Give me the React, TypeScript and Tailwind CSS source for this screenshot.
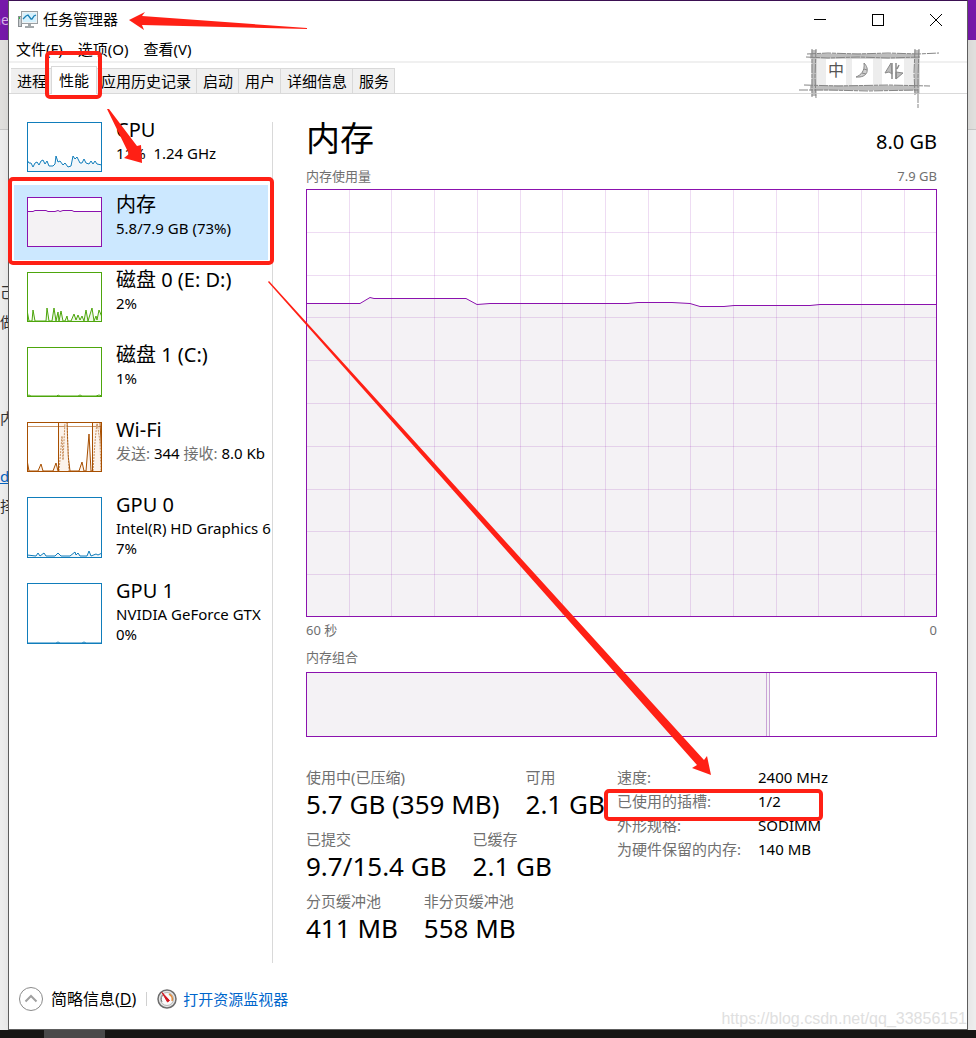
import React from 'react';

type Series = { line: string; open?: boolean; dashed?: boolean };

interface Resource {
  id: string;
  name: string;
  details: React.ReactNode[];
  color: string;
  fill: string;
  height: number;
  series: Series[];
  selected?: boolean;
}

const resources: Resource[] = [
  {
    id: 'cpu',
    name: 'CPU',
    details: ['11%  1.24 GHz'],
    color: '#117dbb',
    fill: '#f1f6fa',
    height: 50,
    series: [
      {
        line: '0,38 2,41 4,41 6,45 8,41 10,40 12,43 14,39 16,38 18,42 20,39 22,44 26,44 28,42 29,34 31,40 33,39 36,43 38,41 41,45 44,44 46,34 48,37 50,35 53,41 55,41 57,37 59,41 62,42 64,39 66,42 68,39 70,42 75,43',
      },
    ],
  },
  {
    id: 'memory',
    name: '内存',
    details: ['5.8/7.9 GB (73%)'],
    color: '#8b12ae',
    fill: '#f4f2f4',
    height: 50,
    selected: true,
    series: [{ line: '0,14.5 6,14.5 8,13.5 19,13.5 21,14.5 28,14.5 31,13.5 33,14.5 36,13.5 45,13.5 47,14.5 75,14.5' }],
  },
  {
    id: 'disk0',
    name: '磁盘 0 (E: D:)',
    details: ['2%'],
    color: '#4da60c',
    fill: '#eff7e9',
    height: 50,
    series: [
      {
        line: '0,38 2,49 5,49 6,38 8,49 19,49 20,36 22,49 25,49 27,36 29,49 31,40 32,49 34,39 36,49 38,49 40,44 41,49 44,49 47,42 49,48 51,43 53,48 55,44 57,49 59,38 61,49 65,36 67,49 69,44 70,48 72,38 75,45',
      },
    ],
  },
  {
    id: 'disk1',
    name: '磁盘 1 (C:)',
    details: ['1%'],
    color: '#4da60c',
    fill: '#eff7e9',
    height: 50,
    series: [{ line: '0,49 2,48 4,49 30,49 31,48 33,49 51,49 53,48 55,49 69,49 72,48 75,49' }],
  },
  {
    id: 'wifi',
    name: 'Wi-Fi',
    details: [
      <>
        <span className="text-[#707070]">发送:</span> 344 <span className="text-[#707070]">接收:</span> 8.0 Kb
      </>,
    ],
    color: '#a74f01',
    fill: '#fcf3eb',
    height: 50,
    series: [
      { line: '0,38 2,49 11,49 14,42 16,49 26,49 29,41 31,49 31.5,49 31.5,0 40,0 41,33 43,49 52,49 55,40 57,49 59,49 62,12 64,49 65.5,49 65.5,0 73,0 75,38' },
      { line: '0,4.5 75,4.5', open: true },
      { line: '32,49 35,14 36,38 38,0 40,0 42,49', dashed: true },
      { line: '66,49 68,20 70,0 73,20 74,49', dashed: true },
    ],
  },
  {
    id: 'gpu0',
    name: 'GPU 0',
    details: ['Intel(R) HD Graphics 6', '7%'],
    color: '#117dbb',
    fill: '#f1f6fa',
    height: 61,
    series: [
      {
        line: '0,58 9,59 11,56 13,59 17,56 19,59 28,59 31,56 34,59 43,59 48,55 49,58 51,56 53,59 60,59 62,54 64,59 69,57 71,58 75,56',
      },
    ],
  },
  {
    id: 'gpu1',
    name: 'GPU 1',
    details: ['NVIDIA GeForce GTX', '0%'],
    color: '#117dbb',
    fill: '#f1f6fa',
    height: 61,
    series: [{ line: '0,60 29,60 31,59 33,60 55,60 57,59 59,60 75,60' }],
  },
];

const menus = ['文件(F)', '选项(O)', '查看(V)'];
const tabs = ['进程', '性能', '应用历史记录', '启动', '用户', '详细信息', '服务'];

const statRows = [
  [
    { label: '使用中(已压缩)', value: '5.7 GB (359 MB)' },
    { label: '可用', value: '2.1 GB' },
  ],
  [
    { label: '已提交', value: '9.7/15.4 GB' },
    { label: '已缓存', value: '2.1 GB' },
  ],
  [
    { label: '分页缓冲池', value: '411 MB' },
    { label: '非分页缓冲池', value: '558 MB' },
  ],
];

const specs = [
  { label: '速度:', value: '2400 MHz' },
  { label: '已使用的插槽:', value: '1/2' },
  { label: '外形规格:', value: 'SODIMM' },
  { label: '为硬件保留的内存:', value: '140 MB' },
];

const Backdrop: React.FC = () => (
  <div className="absolute inset-0 flex flex-col overflow-hidden bg-[#efefef] text-[15px] text-[#333]">
    <div className="h-10 bg-[#7719aa] pt-[10px] text-[#d9b3ea]">
      <span className="flex w-[9px] justify-end overflow-hidden text-sm">ne</span>
    </div>
    <div className="h-[90px] border-b border-[#c8c8c8] bg-[#e2e1df]" />
    <div className="flex w-2 flex-1 flex-col overflow-hidden whitespace-nowrap pt-[147px] leading-[30px]">
      <span>己</span>
      <span>做</span>
      <span className="mt-[66px]">内存</span>
      <a href="#download" className="mt-7 text-[#0563c1] underline">d</a>
      <span>择</span>
    </div>
  </div>
);

const AppIcon: React.FC = () => (
  <svg width="20" height="18" viewBox="0 0 20 18">
    <rect x="0.5" y="5.5" width="3" height="10" fill="#c9cdd0" stroke="#8b9094" />
    <rect x="1" y="6" width="1" height="2" fill="#39b54a" />
    <rect x="3.5" y="0.5" width="16" height="12" fill="#eef2f4" stroke="#9aa0a4" />
    <rect x="5" y="2" width="13" height="9" fill="#d5f1fd" />
    <path d="M5 8 L8 5 L10 4 L13 8 L14 8 L16 5 L18 4" fill="none" stroke="#1b7fb5" strokeWidth="1.3" />
    <path d="M10 13 H13 V15 H16 V17 H7 V15 H10 Z" fill="#a3a8ab" />
  </svg>
);

const Thumb: React.FC<{ item: Resource }> = ({ item }) => (
  <svg
    width="75"
    height={item.height}
    viewBox={`0 0 75 ${item.height}`}
    className="mt-1 shrink-0"
    fill="none"
    stroke={item.color}
  >
    <rect x="0.5" y="0.5" width="74" height={item.height - 1} fill="#fff" />
    {item.series.map((s, i) => (
      <polyline
        key={i}
        points={s.dashed || s.open ? s.line : `0,${item.height} ${s.line} 75,${item.height}`}
        fill={s.open ? 'none' : item.fill}
        strokeDasharray={s.dashed ? '2 1' : undefined}
        opacity={s.dashed || s.open ? 0.6 : 1}
      />
    ))}
    <rect x="0.5" y="0.5" width="74" height={item.height - 1} />
  </svg>
);

const columns = Array.from({ length: 14 }, (_, i) => Math.round((i + 1) * 42.7) + 0.5);
const rows = Array.from({ length: 9 }, (_, i) => Math.round((i + 1) * 42.8) + 0.5);
const usage =
  '0,114.5 54,114.5 64,108.5 68,109.5 160,109.5 171,115.5 184,114.5 322,114.5 332,113.5 366,113.5 384,114.5 394,117.5 418,117.5 428,116.5 504,116.5 514,115.5 631,115.5';

const UsageChart: React.FC = () => (
  <svg className="block h-[428px] w-full" viewBox="0 0 631 428" preserveAspectRatio="none" fill="none">
    <rect width="631" height="428" fill="#fff" />
    <polygon points={`0,428 ${usage} 631,428`} fill="#f4f2f5" />
    <g stroke="#8b12ae" strokeOpacity="0.15">
      {columns.map((x) => (
        <line key={x} x1={x} x2={x} y1="0" y2="428" />
      ))}
      {rows.map((y) => (
        <line key={y} x1="0" x2="631" y1={y} y2={y} />
      ))}
    </g>
    <polyline points={usage} stroke="#8b12ae" />
    <rect x="0.5" y="0.5" width="630" height="427" stroke="#8b12ae" />
  </svg>
);

const Gauge: React.FC = () => (
  <svg width="20" height="20" viewBox="0 0 20 20" fill="none">
    <circle cx="10" cy="10" r="9" fill="#e6e6e6" stroke="#6d6d6d" strokeWidth="1.5" />
    <circle cx="10" cy="10" r="6.5" fill="#fafafa" stroke="#b5b5b5" />
    <path d="M5 13 A6 6 0 0 1 7 5" stroke="#777" />
    <path d="M12 5 A6 6 0 0 1 15 12" stroke="#e08a3c" strokeWidth="1.5" />
    <path d="M5 3.5 L12.5 11.5 L10.5 13 Z" fill="#d2141e" stroke="#d2141e" />
  </svg>
);

const ImeBar: React.FC = () => (
  <svg className="absolute right-[27px] top-[46px]" width="142" height="62" viewBox="0 0 142 62" fill="none">
    <rect x="18" y="10" width="100" height="30" fill="#ededed" />
    <rect x="28" y="12" width="20" height="26" fill="#fff" />
    <rect x="54" y="12" width="21" height="26" fill="#fff" />
    <rect x="84" y="12" width="22" height="26" fill="#fff" />
    <g stroke="#bdbdbd" strokeWidth="5">
      <path d="M12 9 H121 M12 41 H121" />
      <path d="M16 3 V49 M119 3 V47" />
    </g>
    <g stroke="#858585" strokeWidth="1" strokeDasharray="9 1 4 1">
      <path d="M9 7 L30 6 L60 7 L90 6 L120 7 L141 6" />
      <path d="M8 10 L30 11 L60 10 L90 11 L122 10" />
      <path d="M6 38 L40 39 L90 38 L132 39" />
      <path d="M1 43 L30 43 L70 44 L120 43" />
      <path d="M14 2 L14 24 L14 50 M18 2 L17 30 L18 51" />
      <path d="M117 2 L116 26 L117 48 M121 2 L120 30 L120 61" />
    </g>
    <text x="38" y="29" textAnchor="middle" fontSize="16" fill="#555">中</text>
    <path d="M66 16 C72 22 70 31 58 30 C63 28 67 24 66 16 Z" fill="#cfcfcf" stroke="#888" />
    <path d="M66 22 L69 23 M64 26 L68 27" stroke="#888" />
    <path d="M93 16 L87 26 L91 25 L94 27 Z M98 25 L105 26 L98 32 Z" fill="#bdbdbd" stroke="#8a8a8a" />
    <path d="M94 16 V32 M98 16 V32 M101 18 L99 22" stroke="#8a8a8a" strokeWidth="1.5" />
  </svg>
);

const Annotations: React.FC = () => (
  <svg className="pointer-events-none absolute left-0 top-0" width="976" height="1038" viewBox="0 0 976 1038">
    <g fill="none" stroke="#ff2015" strokeWidth="4">
      <rect x="47" y="53" width="53" height="44" rx="3" />
      <rect x="10" y="179" width="262" height="84" rx="3" />
      <rect x="606" y="791" width="215" height="28" rx="3" />
    </g>
    <g fill="#ff2015">
      <path d="M129 20 L145 12 L142 16 L307 28 L307 29 L142 25 L144 30 Z" />
      <path d="M107 109 L109 109 L137 146 L141 145 L142 163 L124 158 L129 154 Z" />
      <path d="M268 282 L269 281 L704 760 L707 756 L711 775 L692 768 L697 765 Z" />
    </g>
  </svg>
);

const App: React.FC = () => {
  return (
    <div className="relative flex min-h-screen flex-col font-['Noto_Sans','Noto_Sans_CJK_SC',sans-serif] text-[15px] text-black">
      <Backdrop />

      <div className="relative mx-2 flex flex-1 flex-col border border-[#5d5d5d] border-t-[#3b1052] bg-white shadow-lg">
        <header className="flex h-[37px] items-center pl-[9px] pr-[2px]">
          <AppIcon />
          <h1 className="ml-[5px] flex-1">任务管理器</h1>
          <button aria-label="最小化" className="flex h-full w-[58px] items-center justify-center">
            <svg width="12" height="12" stroke="#000"><path d="M0 5.5 H12" /></svg>
          </button>
          <button aria-label="最大化" className="flex h-full w-[58px] items-center justify-center">
            <svg width="12" height="12" stroke="#000" fill="none"><rect x="0.5" y="0.5" width="11" height="11" /></svg>
          </button>
          <button aria-label="关闭" className="flex h-full w-[58px] items-center justify-center">
            <svg width="12" height="12" stroke="#000"><path d="M0 0 L12 12 M12 0 L0 12" /></svg>
          </button>
        </header>

        <nav className="flex h-[25px] items-center gap-[15px] border-b-2 border-[#f0f0f0] pl-[7px]">
          {menus.map((m) => (
            <button key={m}>{m}</button>
          ))}
        </nav>

        <div role="tablist" className="flex h-[31px] items-end border-b border-[#d9d9d9] pl-[2px]">
          {tabs.map((t) =>
            t === '性能' ? (
              <button
                key={t}
                role="tab"
                aria-selected="true"
                className="relative -mx-[2px] -mb-px h-7 border border-b-0 border-[#d9d9d9] bg-white px-[7px] pb-px"
              >
                {t}
              </button>
            ) : (
              <button
                key={t}
                role="tab"
                aria-selected="false"
                className="h-[25px] border-r border-t border-[#d9d9d9] bg-[#f0f0f0] pl-[6px] pr-[5px]"
              >
                {t}
              </button>
            ),
          )}
        </div>

        <main className="flex pr-[30px]">
          <aside className="mt-4 w-[263px] shrink-0 overflow-hidden pl-[5px] pr-1">
            {resources.map((r) => (
              <button
                key={r.id}
                className={`flex w-full items-start gap-[14px] pb-[13px] pl-[13px] pt-2 text-left ${
                  r.selected ? 'bg-[#cce8ff]' : ''
                }`}
              >
                <Thumb item={r} />
                <span className="h-0 whitespace-pre">
                  <span className="mb-px block text-xl leading-6">{r.name}</span>
                  {r.details.map((d, i) => (
                    <span key={i} className="block leading-5">{d}</span>
                  ))}
                </span>
              </button>
            ))}
          </aside>

          <section className="mt-7 min-w-0 flex-1 border-l border-[#d9d9d9] pb-3 pl-[33px] text-[#707070]">
            <div className="flex h-[43px] items-start justify-between text-black">
              <h2 className="text-[34px] leading-8">内存</h2>
              <span className="text-xl leading-10">8.0 GB</span>
            </div>
            <div className="flex h-6 items-center justify-between text-[13px]">
              <span>内存使用量</span>
              <span>7.9 GB</span>
            </div>
            <UsageChart />
            <div className="flex h-[27px] items-center justify-between text-[13px]">
              <span>60 秒</span>
              <span>0</span>
            </div>
            <div className="flex h-7 items-center text-[13px]">内存组合</div>
            <div className="flex h-[65px] border border-[#8b12ae] bg-white">
              <div className="w-[73.2%] border-r border-[#c9a3d6] bg-[#f4f2f5]" />
              <div className="w-[3px] border-r border-[#c9a3d6] bg-[#f4f2f5]" />
            </div>

            <div className="mt-7 flex">
              <div className="w-[311px] shrink-0">
                {statRows.map((row, i) => (
                  <div key={i} className="flex h-[62px] gap-[26px] whitespace-nowrap">
                    {row.map((s) => (
                      <div key={s.label}>
                        <div className="leading-6">{s.label}</div>
                        <div className="text-[26px] leading-[30px] text-black">{s.value}</div>
                      </div>
                    ))}
                  </div>
                ))}
              </div>
              <table className="h-24 self-start leading-6">
                <tbody>
                  {specs.map((s) => (
                    <tr key={s.label}>
                      <th scope="row" className="w-[141px] p-0 text-left font-normal">{s.label}</th>
                      <td className="p-0 text-black">{s.value}</td>
                    </tr>
                  ))}
                </tbody>
              </table>
            </div>
          </section>
        </main>

        <footer className="mt-auto flex h-[60px] items-center pl-[10px]">
          <button className="flex items-center gap-2 text-base">
            <svg width="24" height="24" viewBox="0 0 24 24" fill="none">
              <circle cx="12" cy="12" r="11.5" stroke="#8a8a8a" />
              <path d="M6.5 14.5 L12 9 L17.5 14.5" stroke="#a0a0a0" strokeWidth="2" />
            </svg>
            <span>简略信息(<u>D</u>)</span>
          </button>
          <span className="mx-[10px] h-[14px] w-px bg-[#d0d0d0]" />
          <Gauge />
          <a href="#resmon" className="ml-[6px] text-[#0066cc]">打开资源监视器</a>
        </footer>

        <ImeBar />
        <div className="absolute bottom-0 right-0 font-['Liberation_Sans',sans-serif] text-base leading-5 text-[#e0e0e0]">
          https://blog.csdn.net/qq_33856151
        </div>
      </div>

      <div className="relative flex h-2 bg-[#171614]">
        <div className="ml-11 w-[61px] bg-[#4a4a4a]" />
      </div>

      <Annotations />
    </div>
  );
};

export default App;
